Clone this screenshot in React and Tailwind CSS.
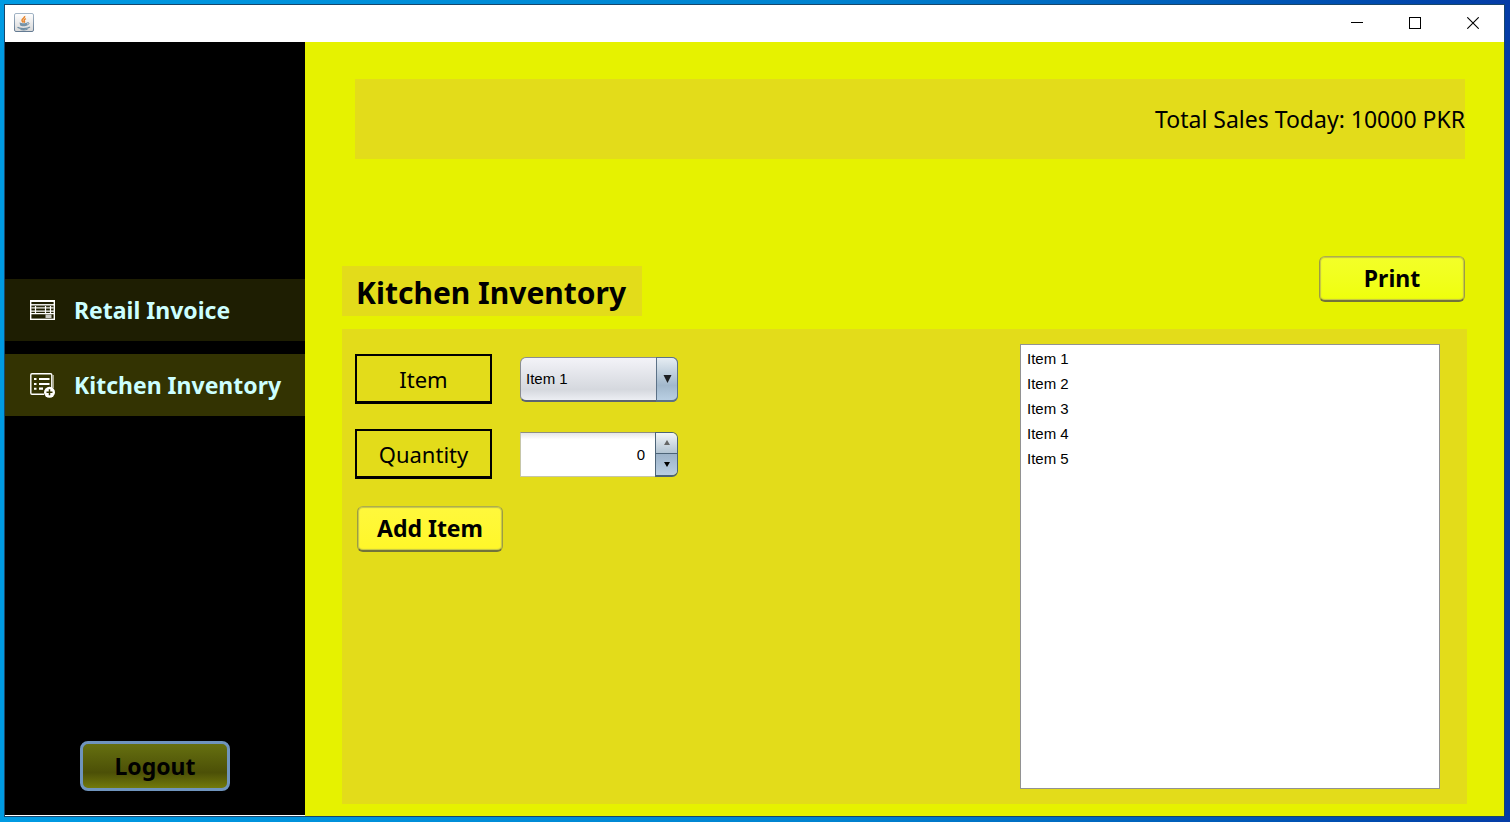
import { useState } from "react";

const ITEMS = ["Item 1", "Item 2", "Item 3", "Item 4", "Item 5"];

function JavaIcon() {
  return (
    <svg viewBox="0 0 20 20" className="size-5 shrink-0" aria-hidden="true">
      <defs>
        <linearGradient id="cup-tile" x1="0" y1="0" x2="0" y2="1">
          <stop offset="0" stopColor="#ffffff" />
          <stop offset="1" stopColor="#d8d8d8" />
        </linearGradient>
        <linearGradient id="cup-edge" x1="0" y1="0" x2="0" y2="1">
          <stop offset="0" stopColor="#a3b5c6" />
          <stop offset="1" stopColor="#647b93" />
        </linearGradient>
      </defs>
      <rect x="0.5" y="0.5" width="19" height="18" rx="1.5" fill="url(#cup-tile)" stroke="url(#cup-edge)" />
      <path d="M10.600 3c.8 1.600-2.600 2.500-2.600 4.200 0 1 .9 1.500 1.300 2.300M11.900 5.600c-1.600.8-2.300 1.500-1.600 2.400.5.700.2 1.200-.4 1.700" fill="none" stroke="#e8862e" strokeWidth="1.500" />
      <path d="M5.500 9.500c2 .9 6 .9 8 0l-.6 3c-.8 1-5.900 1-6.700 0z" fill="#7593a8" />
      <path d="M13.300 9.700c2.400-.6 2.300 2-.6 2.300" fill="none" stroke="#6f8ea4" strokeWidth="1" />
      <path d="M3.500 14.300c2 1.700 10 1.700 12.500-.3M6.500 16.500c2 .5 5 .4 7-.2" fill="none" stroke="#6f8ea4" strokeWidth="1.200" />
    </svg>
  );
}

function InvoiceIcon() {
  return (
    <svg viewBox="0 0 26 22" className="h-[22px] w-[26px] shrink-0" aria-hidden="true">
      <path d="M0.700 1.500v18.800M24.300 1.500v18.800" stroke="#fff" strokeWidth="1.400" />
      <path d="M0 2h25" stroke="#fff" strokeWidth="2" />
      <path d="M0 5.800h25" stroke="#fff" strokeWidth="1.400" />
      <path d="M1 8.800h23" stroke="#b9b9ae" strokeWidth="1.800" />
      <path d="M1 12.200h23M1 14.700h23" stroke="#fff" strokeWidth="1.300" />
      <path d="M5.500 7v7.500M15.500 7v7.500M20.500 7v7.500" stroke="#fff" strokeWidth="1.200" />
      <rect x="15.500" y="15.500" width="6" height="3.500" fill="#c9c9c4" />
      <path d="M0 20.300h25" stroke="#fff" strokeWidth="1.400" />
    </svg>
  );
}

function InventoryIcon() {
  return (
    <svg viewBox="0 0 26 26" className="size-[26px] shrink-0" aria-hidden="true">
      <path d="M23.300 3v13" stroke="#a6a68a" strokeWidth="1.400" />
      <path d="M21.800 16V3a1.200 1.200 0 0 0-1.200-1.200H2A1.200 1.200 0 0 0 .8 3v18a1.200 1.200 0 0 0 1.200 1.200H14" fill="none" stroke="#fff" strokeWidth="1.400" />
      <path d="M4 7h2.500M4 12h2.500M4 16.700h2.500" stroke="#fff" strokeWidth="2" />
      <path d="M9 7h10.500M9 12h10.500M9 16.700h4" stroke="#fff" strokeWidth="2.200" />
      <circle cx="19.500" cy="20.300" r="5.500" fill="#fff" />
      <path d="M19.500 17.300v6M16.500 20.300h6" stroke="#333300" strokeWidth="1.500" />
    </svg>
  );
}

function TitleBar() {
  const control = "flex h-9 w-[58px] items-center justify-center";
  return (
    <header className="flex h-[37px] shrink-0 items-center justify-between bg-white pr-0.5 pb-0.5 pl-[9px]">
      <JavaIcon />
      <div className="flex">
        <button type="button" aria-label="Minimize" className={control}>
          <svg viewBox="0 0 12 12" className="size-3" shapeRendering="crispEdges"><path d="M0 5.500h12" stroke="#000" /></svg>
        </button>
        <button type="button" aria-label="Maximize" className={control}>
          <svg viewBox="0 0 12 12" className="size-3" shapeRendering="crispEdges"><rect x="0.500" y="0.500" width="11" height="11" fill="none" stroke="#000" /></svg>
        </button>
        <button type="button" aria-label="Close" className={control}>
          <svg viewBox="0 0 12 12" className="size-3"><path d="M0.300 0.300l11.400 11.400M11.700 0.300L0.300 11.700" stroke="#000" strokeWidth="1.100" /></svg>
        </button>
      </div>
    </header>
  );
}

function Sidebar() {
  const item = "flex h-[62px] items-center gap-[18px] pl-[25px] text-[23px] font-bold text-[#ccffff]";
  return (
    <aside className="mb-px flex w-[300px] shrink-0 flex-col justify-between bg-black pt-[237px] pb-6">
      <nav className="flex flex-col gap-[13px]">
        <a href="#retail" className={`${item} bg-[#1e1e02]`}>
          <InvoiceIcon />
          Retail Invoice
        </a>
        <a href="#kitchen" className={`${item} bg-[#333302]`}>
          <InventoryIcon />
          Kitchen Inventory
        </a>
      </nav>
      <button
        type="button"
        className="ml-[75px] h-[50px] w-[150px] rounded-lg border-[3px] border-[#6f94bd] bg-linear-to-b from-[#667010] via-[#4c5007] via-65% to-[#727a0c] text-[23px] font-bold text-black"
      >
        Logout
      </button>
    </aside>
  );
}

function FieldLabel({ htmlFor, children }) {
  return (
    <label
      htmlFor={htmlFor}
      className="flex h-[50px] w-[137px] items-center justify-center border-2 border-b-[3px] border-black pt-0.5 text-[22px]"
    >
      {children}
    </label>
  );
}

function QuantitySpinner({ value, onChange }) {
  return (
    <div className="flex h-[45px] w-[158px]">
      <input
        id="quantity"
        type="text"
        inputMode="numeric"
        value={value}
        onChange={(e) => onChange(Number(e.target.value) || 0)}
        className="min-w-0 flex-1 border border-r-0 border-[#c6c6a8] border-t-[#8f8f80] bg-white bg-linear-to-b from-[#e6e6e6] to-white to-15% pt-0.5 pr-[10px] text-right font-['Liberation_Sans',sans-serif] text-[15px] outline-none"
      />
      <div className="flex w-[23px] flex-col overflow-hidden rounded-r-md border border-b-2 border-[#4d6478]">
        <button
          type="button"
          aria-label="Increase quantity"
          onClick={() => onChange(value + 1)}
          className="flex flex-1 items-center justify-center border-b border-[#4d6478] bg-linear-to-b from-[#f2f5f8] to-[#b3c4d2]"
        >
          <svg viewBox="0 0 6 5" className="h-[5px] w-1.5"><path d="M3 0l3 5H0z" fill="#666" /></svg>
        </button>
        <button
          type="button"
          aria-label="Decrease quantity"
          onClick={() => onChange(value - 1)}
          className="flex flex-1 items-center justify-center bg-linear-to-b from-[#9db3c9] to-[#b9cee2]"
        >
          <svg viewBox="0 0 6 5" className="h-[5px] w-1.5"><path d="M0 0h6L3 5z" fill="#000" /></svg>
        </button>
      </div>
    </div>
  );
}

function GlossButton({ tone, children, onClick }) {
  return (
    <button
      type="button"
      onClick={onClick}
      className={`h-[46px] w-[146px] rounded-md border border-b-2 border-[#9c9c44] border-t-[#adad4e] border-b-[#73733a] text-[23px] font-bold inset-shadow-[0_0_1px_1px_#c4c44a] ${tone}`}
    >
      {children}
    </button>
  );
}

function InventoryPanel() {
  const [items, setItems] = useState(ITEMS);
  const [selected, setSelected] = useState(ITEMS[0]);
  const [quantity, setQuantity] = useState(0);

  return (
    <section className="mr-[37px] mb-3 ml-[37px] flex flex-1 justify-between bg-[#e3dc1a] pt-[15px] pr-[27px] pb-[15px] pl-[13px]">
      <div className="flex flex-col gap-[25px] pt-[10px]">
        <div className="flex items-center gap-7">
          <FieldLabel htmlFor="item">Item</FieldLabel>
          <div className="relative h-[45px] w-[158px]">
            <select
              id="item"
              value={selected}
              onChange={(e) => setSelected(e.target.value)}
              className="size-full appearance-none rounded-md border border-b-2 border-[#8a8d94] border-b-[#5c6470] bg-linear-to-b from-[#f3f3f8] via-[#d5d8de] via-75% to-[#eceef3] pt-0.5 pl-[5px] font-['Liberation_Sans',sans-serif] text-[15px] outline-none"
            >
              {ITEMS.map((name) => (
                <option key={name}>{name}</option>
              ))}
            </select>
            <span className="pointer-events-none absolute inset-y-0 right-0 flex w-[22px] items-center justify-center rounded-r-md border border-b-2 border-[#5c7288] bg-linear-to-b from-[#e6edf3] via-[#a2b8cc] via-65% to-[#b9cfe3]">
              <svg viewBox="0 0 9 8" className="h-2 w-[9px]"><path d="M0.500 0h8L4.500 8z" fill="#1d1f22" /></svg>
            </span>
          </div>
        </div>
        <div className="flex items-center gap-7">
          <FieldLabel htmlFor="quantity">Quantity</FieldLabel>
          <QuantitySpinner value={quantity} onChange={setQuantity} />
        </div>
        <div className="pt-0.5 pl-0.5">
          <GlossButton
            tone="bg-linear-to-b from-[#fff83c] to-[#fff729]"
            onClick={() => setItems([...items, selected])}
          >
            Add Item
          </GlossButton>
        </div>
      </div>
      <select
        aria-label="Inventory items"
        size={17}
        className="w-[420px] appearance-none border border-[#929292] bg-white px-1 pt-[5px] font-['Liberation_Sans',sans-serif] text-[15px] outline-none"
      >
        {items.map((name, i) => (
          <option key={i} value={i} className="h-[25px] px-0.5 leading-[25px]">
            {name}
          </option>
        ))}
      </select>
    </section>
  );
}

export default function App() {
  return (
    <div className="flex min-h-screen flex-col bg-linear-to-r from-[#009be3] via-[#0083d0] via-55% to-[#043ca6] pt-1 pr-[5px] pb-[5px] pl-1 font-['Noto_Sans','DejaVu_Sans',sans-serif] text-black">
      <div className="flex flex-1 flex-col border border-[#17466b] bg-white">
        <TitleBar />
        <div className="flex flex-1">
          <Sidebar />
          <main className="flex min-w-0 flex-1 flex-col bg-[#e6f200]">
            <div className="mt-[37px] mr-[39px] ml-[50px] flex h-20 shrink-0 items-center justify-end bg-[#e3dc1a] text-[23px]">
              Total Sales Today: 10000 PKR
            </div>
            <div className="mt-[97px] mr-[39px] mb-[13px] ml-[37px] flex shrink-0 items-start justify-between">
              <h1 className="mt-[10px] flex h-[50px] w-[300px] items-center bg-[#e3dc1a] pt-0.5 pl-[14px] text-[30px] font-bold">
                Kitchen Inventory
              </h1>
              <GlossButton tone="bg-linear-to-b from-[#f3ff28] to-[#efff0a]">Print</GlossButton>
            </div>
            <InventoryPanel />
          </main>
        </div>
      </div>
    </div>
  );
}
